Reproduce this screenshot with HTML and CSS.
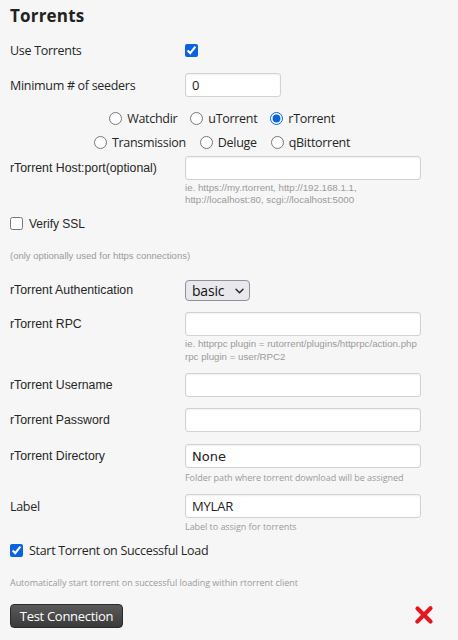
FILE: index.html
```html
<!DOCTYPE html>
<html lang="en">
<head>
<meta charset="utf-8">
<title>Torrents</title>
<link rel="stylesheet" href="styles.css">
</head>
<body>
<form class="panel">
  <h2 class="title">Torrents</h2>

  <div class="row row-use">
    <label class="label" for="use">Use Torrents</label>
    <input type="checkbox" id="use" class="check" checked>
  </div>

  <div class="row row-min">
    <label class="label" for="seeders">Minimum # of seeders</label>
    <input type="text" id="seeders" class="field field-small" value="0">
  </div>

  <div class="radios radios-1">
    <label class="radio"><input type="radio" name="client"><span>Watchdir</span></label>
    <label class="radio"><input type="radio" name="client"><span>uTorrent</span></label>
    <label class="radio"><input type="radio" name="client" checked><span>rTorrent</span></label>
  </div>
  <div class="radios radios-2">
    <label class="radio"><input type="radio" name="client"><span>Transmission</span></label>
    <label class="radio"><input type="radio" name="client"><span>Deluge</span></label>
    <label class="radio"><input type="radio" name="client"><span>qBittorrent</span></label>
  </div>

  <div class="row row-host">
    <label class="label arial" for="host">rTorrent Host:port(optional)</label>
    <input type="text" id="host" class="field">
  </div>
  <p class="hint arial hint-host">ie. https://my.rtorrent, http://192.168.1.1,<br>http://localhost:80, scgi://localhost:5000</p>

  <div class="row check-row row-ssl">
    <input type="checkbox" id="ssl" class="check">
    <label class="arial ssl-text" for="ssl">Verify SSL</label>
  </div>
  <p class="note arial note-ssl">(only optionally used for https connections)</p>

  <div class="row row-auth">
    <label class="label arial" for="auth">rTorrent Authentication</label>
    <span class="select-wrap">
      <select id="auth" class="select">
        <option>basic</option>
        <option>digest</option>
      </select>
      <svg class="chevron" width="9" height="6" viewBox="0 0 9 6"><path d="M1 1.2l3.5 3.5 3.5-3.5" fill="none" stroke="#222" stroke-width="1.4" stroke-linecap="round" stroke-linejoin="round"/></svg>
    </span>
  </div>

  <div class="row row-rpc">
    <label class="label arial" for="rpc">rTorrent RPC</label>
    <input type="text" id="rpc" class="field">
  </div>
  <p class="hint arial hint-rpc">ie. httprpc plugin = rutorrent/plugins/httprpc/action.php<br>rpc plugin = user/RPC2</p>

  <div class="row row-user">
    <label class="label arial" for="user">rTorrent Username</label>
    <input type="text" id="user" class="field">
  </div>

  <div class="row row-pass">
    <label class="label arial" for="pass">rTorrent Password</label>
    <input type="password" id="pass" class="field">
  </div>

  <div class="row row-dir">
    <label class="label arial" for="dir">rTorrent Directory</label>
    <input type="text" id="dir" class="field field-verdana" value="None">
  </div>
  <p class="hint sans hint-dir">Folder path where torrent download will be assigned</p>

  <div class="row row-label">
    <label class="label" for="tlabel">Label</label>
    <input type="text" id="tlabel" class="field" value="MYLAR">
  </div>
  <p class="hint sans hint-label">Label to assign for torrents</p>

  <div class="row check-row row-start">
    <input type="checkbox" id="start" class="check" checked>
    <label class="start-text" for="start">Start Torrent on Successful Load</label>
  </div>
  <p class="note sans note-start">Automatically start torrent on successful loading within rtorrent client</p>

  <div class="actions">
    <button type="button" class="btn">Test Connection</button>
    <svg class="status" width="20" height="20" viewBox="0 0 20 20">
      <path d="M3.5 3.5L16.5 16.5M16.5 3.2L3.3 16.6" fill="none" stroke="#e5161f" stroke-width="4.2" stroke-linecap="round"/>
    </svg>
  </div>
</form>
</body>
</html>
```

FILE: styles.css
```css
html, body {
  margin: 0;
  background: #f6f6f6;
}

body {
  font-family: "Open Sans", "Noto Sans", sans-serif;
  color: #2b2b2b;
}

.panel {
  padding: 0 10px;
  width: 424px;
}

.title {
  margin: 0;
  padding-top: 6px;
  font-size: 17px;
  line-height: 20px;
  font-weight: 700;
  letter-spacing: 0.2px;
  color: #222;
}

.row {
  display: flex;
  align-items: center;
  min-height: 24px;
}

.label {
  width: 175px;
  flex: none;
  font-size: 12.5px;
  letter-spacing: -0.3px;
  color: #262626;
}

.arial {
  font-family: "Liberation Sans", Arial, sans-serif;
}

.label.arial {
  font-size: 12.3px;
  letter-spacing: 0;
}

.sans {
  font-family: "Open Sans", "Noto Sans", sans-serif;
}

.check {
  width: 13px;
  height: 13px;
  margin: 0;
  accent-color: #0b62e0;
}

.field {
  box-sizing: border-box;
  width: 236px;
  height: 24px;
  margin: 0;
  padding: 0 6px;
  border: 1px solid #d2d2d2;
  border-radius: 3px;
  background: #fff;
  box-shadow: inset 0 1px 2px rgba(0, 0, 0, 0.06);
  font-family: "Open Sans", "Noto Sans", sans-serif;
  font-size: 13px;
  letter-spacing: -0.2px;
  color: #222;
}

.field-small {
  width: 96px;
}

.field-verdana {
  font-family: "DejaVu Sans", Verdana, sans-serif;
  font-size: 13px;
  letter-spacing: 0;
}

.row-use { margin-top: 12px; height: 25px; }
.row-min { margin-top: 10px; }

.radios {
  display: flex;
  justify-content: center;
  gap: 13px;
  height: 24px;
  align-items: center;
}
.radios-1 { margin-top: 9px; }
.radios-2 { gap: 14px; }

.radio {
  display: flex;
  align-items: center;
  gap: 5px;
  font-size: 12.5px;
  letter-spacing: -0.3px;
  color: #262626;
}

.radio input {
  width: 13px;
  height: 13px;
  margin: 0;
  accent-color: #0b62e0;
}

.row-host { margin-top: 2px; }

.hint {
  margin: 2px 0 0 175px;
  font-size: 9.7px;
  line-height: 12px;
  color: #9a9a9a;
}

.hint.sans {
  font-size: 9px;
  letter-spacing: -0.05px;
}

.check-row {
  gap: 6px;
}

.ssl-text {
  font-size: 12px;
  color: #262626;
}

.row-ssl { margin-top: 5px; height: 25px; }

.note {
  margin: 14px 0 0;
  font-size: 9.5px;
  line-height: 12px;
  color: #9a9a9a;
}

.note.sans {
  font-size: 9px;
  letter-spacing: -0.05px;
}

.row-auth { margin-top: 16px; }

.select-wrap {
  position: relative;
  display: inline-flex;
}

.select {
  appearance: none;
  -webkit-appearance: none;
  box-sizing: border-box;
  width: 65px;
  height: 21px;
  margin: 0;
  padding: 0 0 0 6px;
  border: 1px solid #8f8f9d;
  border-radius: 4px;
  background: #e9e9ed;
  font-family: "Open Sans", "Noto Sans", sans-serif;
  font-size: 14px;
  letter-spacing: -0.2px;
  color: #111;
}

.chevron {
  position: absolute;
  right: 6px;
  top: 8px;
  pointer-events: none;
}

.row-rpc { margin-top: 10px; }
.hint-rpc { margin-top: 2px; line-height: 12.5px; }

.row-user { margin-top: 10px; }
.row-pass { margin-top: 11px; }
.row-dir { margin-top: 12px; }
.hint-dir { margin-top: 4px; }
.row-label { margin-top: 10px; }
.hint-label { margin-top: 3px; }

.row-start { margin-top: 5px; height: 25px; }

.start-text {
  font-size: 12.5px;
  letter-spacing: -0.3px;
  color: #262626;
}

.note-start { margin-top: 14px; }

.actions {
  display: flex;
  align-items: center;
  justify-content: space-between;
  margin-top: 15px;
}

.btn {
  box-sizing: border-box;
  width: 113px;
  height: 24px;
  padding: 0;
  border: 1px solid #2a2a2a;
  border-radius: 4px;
  background: linear-gradient(#5a5a5a, #3a3a3a);
  color: #fff;
  font-family: "Open Sans", "Noto Sans", sans-serif;
  font-size: 13px;
  letter-spacing: -0.3px;
}

.status {
  margin-top: -2px;
}
```
